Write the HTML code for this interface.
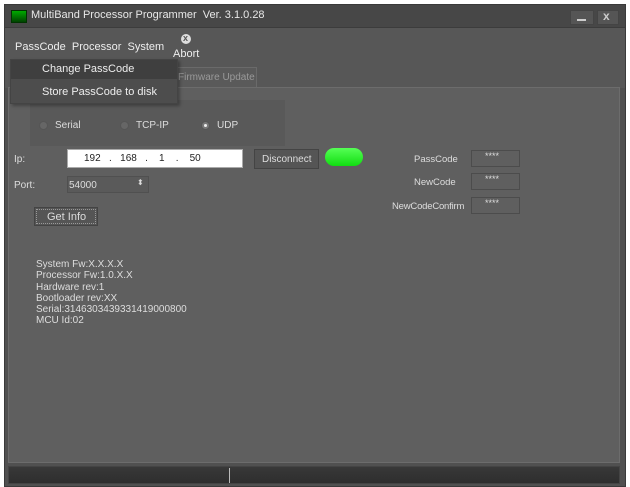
<!DOCTYPE html><html><head><style>
body{margin:0;width:630px;height:487px;background:#fff;position:relative;overflow:hidden;font-family:"Liberation Sans",sans-serif;font-size:10px;color:#ddd}
div{position:absolute;box-sizing:border-box}
.t{white-space:nowrap}
</style></head><body>
<div style="left:4px;top:4px;width:622px;height:483px;background:#505050;border:1px solid #3a3a3a"></div>
<div style="left:5px;top:5px;width:620px;height:23px;background:#474747;border-bottom:1px solid #3c3c3c"></div>
<div style="left:11px;top:10px;width:16px;height:13px;background:linear-gradient(#0a0,#040);border:1px solid #030"></div>
<div class="t" style="left:31px;top:9px;font-size:11px;color:#e8e8e8">MultiBand Processor Programmer&nbsp; Ver. 3.1.0.28</div>
<div style="left:570px;top:10px;width:24px;height:15px;background:#555;border:1px solid #444"></div>
<div style="left:577px;top:19px;width:9px;height:2px;background:#ccc"></div>
<div style="left:597px;top:10px;width:22px;height:15px;background:#555;border:1px solid #444"></div>
<div class="t" style="left:603px;top:9px;font-size:12px;font-weight:bold;color:#ccc">x</div>
<div style="left:5px;top:28px;width:620px;height:60px;background:#575757"></div>
<div class="t" style="left:15px;top:41px;font-size:11px;color:#eee">PassCode&nbsp; Processor&nbsp; System</div>
<div style="left:181px;top:34px;width:10px;height:10px;border-radius:50%;background:#ddd"></div>
<div class="t" style="left:183px;top:33px;font-size:9px;font-weight:bold;color:#555">x</div>
<div class="t" style="left:173px;top:48px;font-size:11px;color:#eee">Abort</div>
<div style="left:175px;top:67px;width:82px;height:21px;background:#5a5a5a;border:1px solid #6a6a6a;border-bottom:none"></div>
<div class="t" style="left:178px;top:72px;color:#999">Firmware Update</div>
<div style="left:8px;top:87px;width:612px;height:376px;background:#5f5f5f;border:1px solid #6c6c6c"></div>
<div style="left:30px;top:100px;width:255px;height:46px;background:#595959"></div>
<div style="left:39px;top:121px;width:9px;height:9px;border-radius:50%;background:#666;border:1px solid #555"></div>
<div class="t" style="left:55px;top:120px">Serial</div>
<div style="left:120px;top:121px;width:9px;height:9px;border-radius:50%;background:#666;border:1px solid #555"></div>
<div class="t" style="left:136px;top:120px">TCP-IP</div>
<div style="left:201px;top:121px;width:9px;height:9px;border-radius:50%;background:#777;border:1px solid #555"></div>
<div style="left:204px;top:124px;width:3px;height:3px;border-radius:50%;background:#eee"></div>
<div class="t" style="left:217px;top:120px">UDP</div>
<div class="t" style="left:14px;top:154px">Ip:</div>
<div style="left:67px;top:149px;width:176px;height:19px;background:#fff;border:1px solid #aaa"></div>
<div class="t" style="left:84px;top:153px;color:#222">192&nbsp;&nbsp;&nbsp;.&nbsp;&nbsp;&nbsp;168&nbsp;&nbsp;&nbsp;.&nbsp;&nbsp;&nbsp;&nbsp;1&nbsp;&nbsp;&nbsp;&nbsp;.&nbsp;&nbsp;&nbsp;&nbsp;50</div>
<div style="left:254px;top:149px;width:65px;height:20px;background:#555;border:1px solid #444"></div>
<div class="t" style="left:262px;top:154px">Disconnect</div>
<div style="left:325px;top:148px;width:38px;height:18px;border-radius:9px;background:linear-gradient(#5f5,#1d1)"></div>
<div class="t" style="left:14px;top:180px">Port:</div>
<div style="left:67px;top:176px;width:82px;height:17px;background:#5a5a5a;border:1px solid #505050"></div>
<div class="t" style="left:69px;top:180px">54000</div>
<div class="t" style="left:137px;top:178px;font-size:8px">⬍</div>
<div style="left:34px;top:207px;width:64px;height:19px;background:#555;border:1px solid #444"></div>
<div style="left:36px;top:209px;width:60px;height:15px;border:1px dotted #999"></div>
<div class="t" style="left:47px;top:211px;font-size:11px">Get Info</div>
<div class="t" style="left:414px;top:154px;font-size:9.5px">PassCode</div>
<div class="t" style="left:414px;top:177px;font-size:9.5px">NewCode</div>
<div class="t" style="left:392px;top:201px;font-size:9.5px;letter-spacing:-0.2px">NewCodeConfirm</div>
<div style="left:471px;top:150px;width:49px;height:17px;border:1px solid #4c4c4c"></div>
<div style="left:471px;top:173px;width:49px;height:17px;border:1px solid #4c4c4c"></div>
<div style="left:471px;top:197px;width:49px;height:17px;border:1px solid #4c4c4c"></div>
<div class="t" style="left:485px;top:151px;font-size:9px">****</div>
<div class="t" style="left:485px;top:174px;font-size:9px">****</div>
<div class="t" style="left:485px;top:198px;font-size:9px">****</div>
<div class="t" style="left:36px;top:259px;line-height:11.3px">System Fw:X.X.X.X<br>Processor Fw:1.0.X.X<br>Hardware rev:1<br>Bootloader rev:XX<br>Serial:3146303439331419000800<br>MCU Id:02</div>
<div style="left:8px;top:466px;width:612px;height:18px;background:linear-gradient(#383838,#2e2e2e);border:1px solid #444"></div>
<div style="left:229px;top:468px;width:1px;height:15px;background:#bbb"></div>
<div style="left:10px;top:59px;width:168px;height:45px;background:#4d4d4d;border:1px solid #444;box-shadow:2px 2px 3px rgba(0,0,0,.3)"></div>
<div style="left:11px;top:60px;width:166px;height:19px;background:#3f3f3f"></div>
<div class="t" style="left:42px;top:63px;font-size:11px;color:#eee">Change PassCode</div>
<div class="t" style="left:42px;top:86px;font-size:11px;color:#eee">Store PassCode to disk</div>
</body></html>
